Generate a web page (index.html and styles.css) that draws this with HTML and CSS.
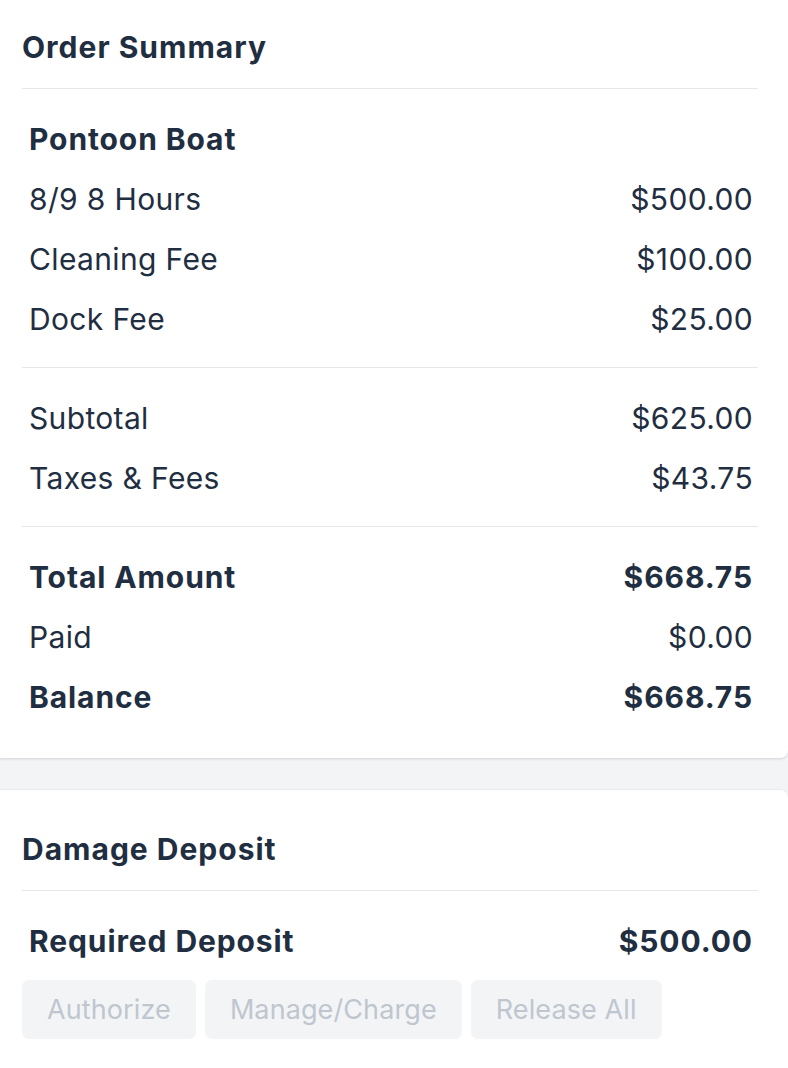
FILE: index.html
```html
<!DOCTYPE html>
<html>
<head>
<meta charset="utf-8">
<link rel="stylesheet" href="styles.css">
</head>
<body>
<div class="page">
  <section class="card card-first">
    <div class="card-header"><h2 class="card-title">Order Summary</h2></div>
    <div class="group">
      <div class="row strong"><span>Pontoon Boat</span></div>
      <div class="row"><span>8/9 8 Hours</span><span>$500.00</span></div>
      <div class="row"><span>Cleaning Fee</span><span>$100.00</span></div>
      <div class="row"><span>Dock Fee</span><span>$25.00</span></div>
    </div>
    <div class="group">
      <div class="row"><span>Subtotal</span><span>$625.00</span></div>
      <div class="row"><span>Taxes &amp; Fees</span><span>$43.75</span></div>
    </div>
    <div class="group group-last">
      <div class="row strong"><span>Total Amount</span><span>$668.75</span></div>
      <div class="row"><span>Paid</span><span>$0.00</span></div>
      <div class="row strong"><span>Balance</span><span>$668.75</span></div>
    </div>
  </section>
  <section class="card card-second">
    <div class="card-header"><h2 class="card-title">Damage Deposit</h2></div>
    <div class="deposit">
      <div class="row strong"><span>Required Deposit</span><span>$500.00</span></div>
      <div class="actions">
        <button class="btn" disabled>Authorize</button>
        <button class="btn" disabled>Manage/Charge</button>
        <button class="btn" disabled>Release All</button>
      </div>
    </div>
  </section>
</div>
</body>
</html>
```
FILE: styles.css
```css
* { box-sizing: border-box; }
html, body { margin: 0; padding: 0; }
body {
  background: #f3f4f6;
  font-family: Inter, "Noto Sans", "Liberation Sans", sans-serif;
  color: #1f2e41;
  overflow: hidden;
}
.page {
  display: flex;
  flex-direction: column;
  gap: 32px;
}
.card {
  background: #ffffff;
  margin: 0 0 0 -6px;
  padding: 0 30px 0 28px;
  border-radius: 8px;
  box-shadow: 0 2px 3px -1px rgba(15, 23, 42, 0.16), 0 -1px 1px rgba(15, 23, 42, 0.04);
}
.card-first { margin-top: -12px; }
.card-header {
  height: 101px;
  padding-top: 44px;
  border-bottom: 1px solid #e5e7eb;
}
.card-title {
  margin: 0;
  font-size: 30px;
  line-height: 30px;
  font-weight: 700;
  letter-spacing: 1px;
}
.group {
  padding: 20px 5px 18px 7px;
  border-bottom: 1px solid #e5e7eb;
}
.group-last {
  border-bottom: none;
  padding-bottom: 31px;
}
.row {
  display: flex;
  justify-content: space-between;
  align-items: center;
  height: 60px;
  font-size: 30px;
  font-weight: 400;
  letter-spacing: 0.35px;
}
.row.strong { font-weight: 700; letter-spacing: 0.9px; }
.deposit {
  padding-top: 20px;
  padding-bottom: 40px;
}
.deposit .row { padding: 0 5px 0 7px; }
.actions {
  display: flex;
  gap: 9px;
  margin-top: 9px;
}
.btn {
  font-family: inherit;
  font-size: 27px;
  letter-spacing: 0.1px;
  color: #bfc6d0;
  background: #f3f4f6;
  border: none;
  border-radius: 7px;
  height: 59px;
  padding: 0 25px;
}
```
